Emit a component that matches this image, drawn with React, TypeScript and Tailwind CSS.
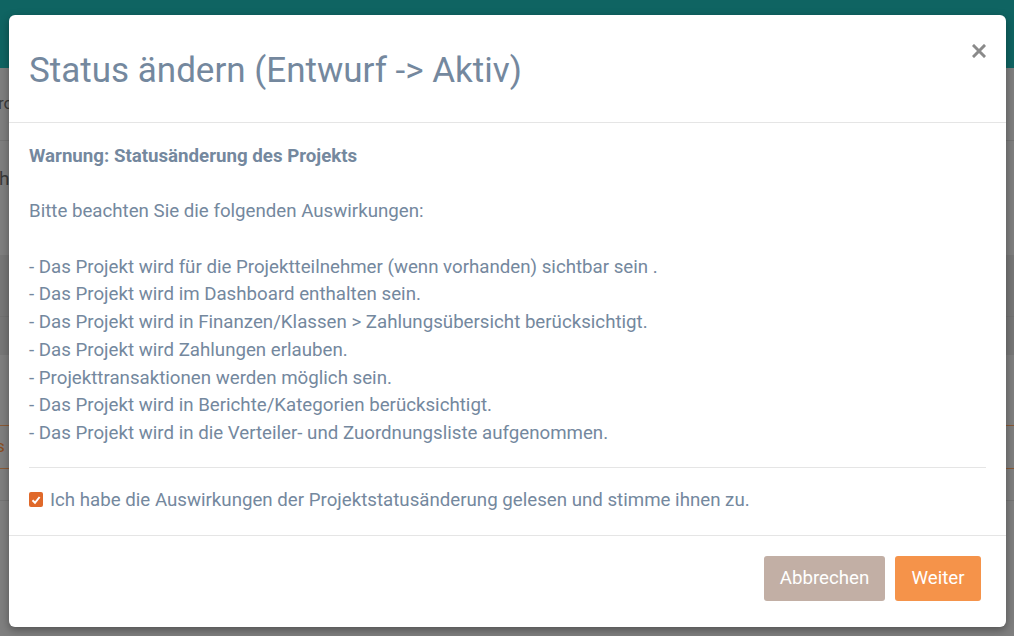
import { useState } from "react";

const effects = [
  "- Das Projekt wird für die Projektteilnehmer (wenn vorhanden) sichtbar sein .",
  "- Das Projekt wird im Dashboard enthalten sein.",
  "- Das Projekt wird in Finanzen/Klassen > Zahlungsübersicht berücksichtigt.",
  "- Das Projekt wird Zahlungen erlauben.",
  "- Projekttransaktionen werden möglich sein.",
  "- Das Projekt wird in Berichte/Kategorien berücksichtigt.",
  "- Das Projekt wird in die Verteiler- und Zuordnungsliste aufgenommen.",
];

function Backdrop() {
  // dimmed page behind the dialog
  return (
    <div className="flex flex-col w-full h-[636px] bg-[#7f7f7f] overflow-hidden">
      <div className="h-[68px] bg-[#0f6462] shrink-0" />
      <div className="flex flex-col text-[17px] text-[#3a3a3a]">
        <div className="h-[73px] flex items-center border-b border-[#747474]">
          <span className="-ml-[2px]">ro</span>
        </div>
        <div className="h-[76px] flex items-center text-[19px]">
          <span className="-ml-[1px]">h</span>
        </div>
        <div className="h-[38px]" />
        <div className="h-[62px] bg-[#777777] border-b border-[#727272]" />
        <div className="h-[38px] bg-[#777777]" />
        <div className="h-[70px]" />
        <div className="h-[44px] border-y border-[#8a5a36] flex items-center text-[#8a4e20]">
          <span className="-ml-[4px]">s</span>
        </div>
        <div className="h-[32px] border-b border-[#747474]" />
      </div>
    </div>
  );
}

export default function App() {
  const [checked, setChecked] = useState(true);

  return (
    <div className="relative w-full h-[636px] overflow-hidden font-['Roboto',sans-serif]">
      <Backdrop />

      <div className="absolute left-[9px] top-[15px] w-[997px] h-[612px] bg-white rounded-[6px] shadow-[0_3px_8px_rgba(0,0,0,0.35)] flex flex-col text-[#74889e]">
        <div className="h-[108px] shrink-0 flex items-center justify-between px-[20px] border-b border-[#e5e5e5]">
          <h2 className="text-[35px] font-normal leading-none pt-[3px]">Status ändern (Entwurf -&gt; Aktiv)</h2>
          <button className="text-[#8a8a8a] -mt-[36px]">
            <svg width="14" height="14" viewBox="0 0 14 14">
              <path d="M2 2 L12 12 M12 2 L2 12" stroke="currentColor" strokeWidth="3" strokeLinecap="square" />
            </svg>
          </button>
        </div>

        <div className="flex-1 px-[20px] pt-[20px] flex flex-col">
          <div className="text-[18.7px] leading-[27.7px]">
            <p className="font-bold">Warnung: Statusänderung des Projekts</p>
            <p className="h-[27.7px]" />
            <p>Bitte beachten Sie die folgenden Auswirkungen:</p>
            <p className="h-[27.7px]" />
            {effects.map((e) => (
              <p key={e}>{e}</p>
            ))}
          </div>
          <div className="mt-[19px] border-t border-[#e5e5e5]" />
          <label className="flex items-center gap-[7px] mt-[18px] text-[18.7px] leading-[28px] cursor-pointer">
            <span
              onClick={() => setChecked(!checked)}
              className="w-[14px] h-[15px] rounded-[2px] bg-[#e0692a] flex items-center justify-center"
            >
              {checked && (
                <svg width="10" height="10" viewBox="0 0 10 10">
                  <path d="M1.5 5.2 L4 7.8 L8.6 2" stroke="white" strokeWidth="2" fill="none" />
                </svg>
              )}
            </span>
            <span>Ich habe die Auswirkungen der Projektstatusänderung gelesen und stimme ihnen zu.</span>
          </label>
        </div>

        <div className="h-[92px] shrink-0 border-t border-[#e5e5e5] flex justify-end items-start gap-[10px] pt-[20px] pr-[25px]">
          <button className="h-[45px] w-[121px] rounded-[3px] bg-[#c2afa5] text-white text-[18.7px]">Abbrechen</button>
          <button className="h-[45px] w-[86px] rounded-[3px] bg-[#f5934a] text-white text-[18.7px]">Weiter</button>
        </div>
      </div>
    </div>
  );
}
